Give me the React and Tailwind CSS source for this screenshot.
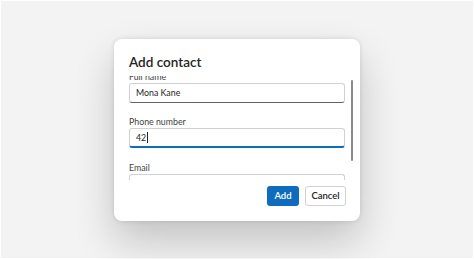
import React from "react";

const font = { fontFamily: "Lato, 'Open Sans', sans-serif" };

function Field({ label, value, focused, caret, className = "" }) {
  return (
    <div className={"flex flex-col " + className}>
      <div className="h-[13px] leading-[13px] text-[8.8px] text-[#424242]">{label}</div>
      <div
        className={
          "h-[20px] rounded-[3px] border border-[#d1d1d1] bg-white flex items-center pl-[6px] text-[8.8px] text-[#242424] " +
          (focused ? "border-b-2 border-b-[#0f6cbd]" : "border-b-[#616161]")
        }
      >
        <span>{value}</span>
        {caret && <span className="ml-[1px] inline-block w-[1px] h-[11px] bg-[#242424]" />}
      </div>
    </div>
  );
}

export default function App() {
  return (
    <div className="w-[474px] h-[259px] bg-white p-[1px]" style={font}>
      <div className="w-full h-full bg-[#f3f3f3] flex items-center justify-center">
        <div className="w-[246px] h-[182px] bg-white rounded-[8px] shadow-[0_0_5px_rgba(0,0,0,0.12),0_20px_40px_rgba(0,0,0,0.2)] flex flex-col pt-[13px] px-[15px] pb-[15px]">
          <div className="h-[20px] leading-[20px] text-[13.5px] font-semibold text-[#242424]">Add contact</div>
          <div className="mt-[4px] h-[104px] flex">
            <div className="flex-1 overflow-hidden">
              <div className="flex flex-col gap-[12.5px] -mt-[6px]">
                <Field label="Full name" value="Mona Kane" />
                <Field label="Phone number" value="42" focused caret />
                <Field label="Email" value="" />
              </div>
            </div>
            <div className="w-[2px] ml-[6px] -mr-[8px] pt-[4px]">
              <div className="h-[81px] w-[1.5px] bg-[#8a8a8a] rounded-full" />
            </div>
          </div>
          <div className="mt-[6px] -mr-[1px] flex justify-end gap-[6px]">
            <button className="h-[20px] w-[32px] rounded-[3px] bg-[#0f6cbd] text-white text-[9.5px] font-semibold leading-none">Add</button>
            <button className="h-[20px] w-[41px] rounded-[3px] border border-[#d1d1d1] bg-white text-[#242424] text-[9.5px] font-semibold leading-none">Cancel</button>
          </div>
        </div>
      </div>
    </div>
  );
}
